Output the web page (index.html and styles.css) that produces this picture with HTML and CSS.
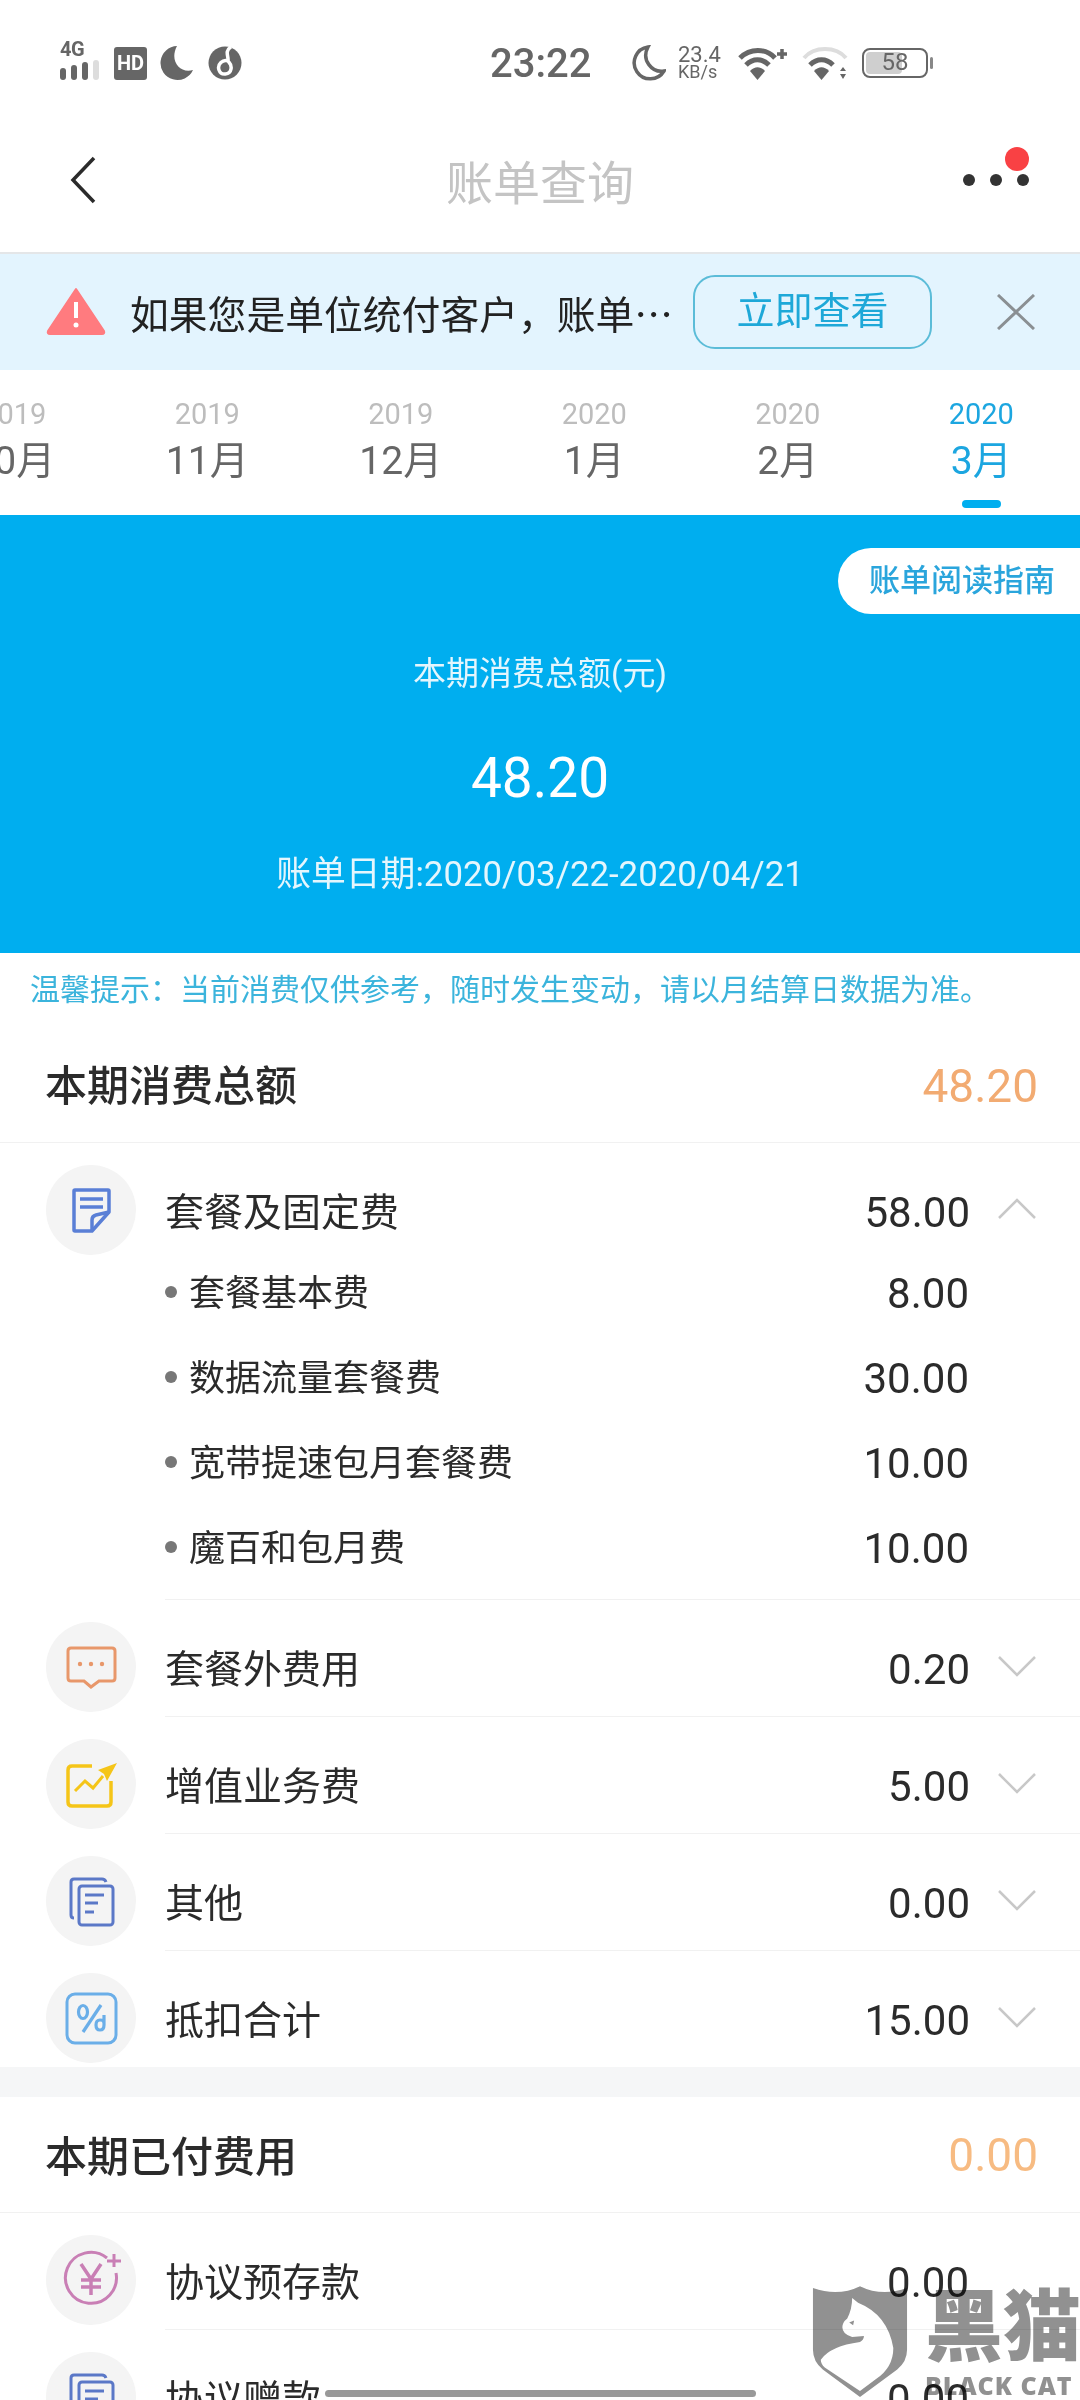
FILE: index.html
```html
<!DOCTYPE html>
<html lang="zh-CN">
<head>
<meta charset="UTF-8">
<title>账单查询</title>
<link rel="stylesheet" href="styles.css">
</head>
<body>
<div class="status-bar">
    <div class="status-left">
        <div class="signal">
            <span class="signal-type">4G</span>
            <span class="signal-bars"><i></i><i></i><i></i><i class="off"></i></span>
        </div>
        <span class="hd-badge">HD</span>
        <svg class="st-moon" viewBox="0 0 36 36"><path d="M19 1 A17 17 0 1 0 35 25 C22 29 11 16 19 1 Z" fill="#666"/></svg>
        <svg class="st-globe" viewBox="0 0 34 34"><circle cx="17" cy="17" r="16.500" fill="#666"/><path d="M23 1 C16 5 21 11 20 15 C15 13 9 18 11 24 C13 30 22 29 23 23 C24 18 21 17 20 15" fill="none" stroke="#fff" stroke-width="3.500"/></svg>
    </div>
    <span class="status-time">23:22</span>
    <div class="status-right">
        <svg class="st-moon-line" viewBox="0 0 36 36"><path d="M18 2 A16 16 0 1 0 34 26 C22 28 11 15 18 2 Z" fill="none" stroke="#666" stroke-width="3.500"/></svg>
        <div class="net-speed"><span class="speed-num">23.4</span><span class="speed-unit">KB/s</span></div>
        <svg class="st-wifi" viewBox="0 0 50 34"><g fill="none" stroke="#666" stroke-width="5"><path d="M2 12 C12 2 28 2 37 12"/><path d="M8 19 C15 12 24 12 31 19"/></g><path d="M12 25 C17 20 22 20 27 25 L19.500 34 Z" fill="#666"/><path d="M39 8 H49 M44 3 V13" stroke="#666" stroke-width="3.500"/></svg>
        <svg class="st-wifi" viewBox="0 0 50 34"><path d="M2 12 C12 0 34 0 44 12" fill="none" stroke="#ddd" stroke-width="4"/><path d="M8 19 C15 12 24 12 31 19" fill="none" stroke="#666" stroke-width="5"/><path d="M12 25 C17 20 22 20 27 25 L19.500 34 Z" fill="#666"/><path d="M41 21 L44 25 H38 Z M41 33 L44 28 H38 Z" fill="#666"/></svg>
        <div class="battery">
            <span class="battery-level"></span>
            <span class="battery-num">58</span>
        </div>
    </div>
</div>

<div class="nav">
    <svg class="nav-back" viewBox="0 0 26 48"><path d="M24 2 L3 24 L24 46" fill="none" stroke="#2b2b2b" stroke-width="3.500"/></svg>
    <span class="nav-title">账单查询</span>
    <div class="nav-more">
        <i class="nav-dot"></i><i class="nav-dot"></i><i class="nav-dot"></i>
        <i class="nav-badge"></i>
    </div>
</div>

<div class="notice">
    <svg class="notice-icon" viewBox="0 0 60 48"><path d="M30 2 L58 44 Q59 47 56 47 H4 Q1 47 2 44 Z" fill="#ff7b7f" stroke="#ff7b7f" stroke-width="2" stroke-linejoin="round"/><path d="M30 15 V31" stroke="#fff" stroke-width="4"/><circle cx="30" cy="38" r="2.500" fill="#fff"/></svg>
    <span class="notice-text">如果您是单位统付客户，账单⋯</span>
    <span class="notice-btn">立即查看</span>
    <svg class="notice-close" viewBox="0 0 38 36"><path d="M1 1 L37 35 M37 1 L1 35" stroke="#8a8f93" stroke-width="3"/></svg>
</div>

<div class="months">
    <div class="month"><span class="month-year">2019</span><span class="month-name">10月</span></div>
    <div class="month"><span class="month-year">2019</span><span class="month-name">11月</span></div>
    <div class="month"><span class="month-year">2019</span><span class="month-name">12月</span></div>
    <div class="month"><span class="month-year">2020</span><span class="month-name">1月</span></div>
    <div class="month"><span class="month-year">2020</span><span class="month-name">2月</span></div>
    <div class="month active"><span class="month-year">2020</span><span class="month-name">3月</span><i class="month-line"></i></div>
</div>

<div class="summary">
    <span class="guide-pill">账单阅读指南</span>
    <p class="summary-label">本期消费总额(元)</p>
    <p class="summary-amount">48.20</p>
    <p class="summary-date">账单日期:2020/03/22-2020/04/21</p>
</div>

<p class="tip">温馨提示：当前消费仅供参考，随时发生变动，请以月结算日数据为准。</p>

<div class="section-head">
    <span class="section-name">本期消费总额</span>
    <span class="section-amount">48.20</span>
</div>

<div class="item">
    <span class="item-icon">
        <svg viewBox="0 0 90 90"><g fill="none" stroke="#5a7fd6" stroke-width="3.500" stroke-linejoin="round"><path d="M29 25 H62 Q63 25 63 26 V47 L46 66 H29 Q28 66 28 65 V26 Q28 25 29 25 Z"/><path d="M63 47 L50 50 Q46 51 46 55 V66"/></g><path d="M34 34 H57 M34 42 H57" stroke="#5a7fd6" stroke-width="3.500"/></svg>
    </span>
    <div class="item-body">
        <div class="item-head">
            <span class="item-name">套餐及固定费</span>
            <span class="item-value">58.00</span>
            <svg class="item-arrow" viewBox="0 0 38 22"><path d="M1 20 L19 2 L37 20" fill="none" stroke="#c8c8c8" stroke-width="2.500"/></svg>
        </div>
        <div class="sub-row"><i class="sub-dot"></i><span class="sub-name">套餐基本费</span><span class="sub-value">8.00</span></div>
        <div class="sub-row"><i class="sub-dot"></i><span class="sub-name">数据流量套餐费</span><span class="sub-value">30.00</span></div>
        <div class="sub-row"><i class="sub-dot"></i><span class="sub-name">宽带提速包月套餐费</span><span class="sub-value">10.00</span></div>
        <div class="sub-row"><i class="sub-dot"></i><span class="sub-name">魔百和包月费</span><span class="sub-value">10.00</span></div>
    </div>
</div>

<div class="item">
    <span class="item-icon">
        <svg viewBox="0 0 90 90"><path d="M25 26 H66 Q69 26 69 29 V56 Q69 59 66 59 H53 L45 65 L38 59 H25 Q22 59 22 56 V29 Q22 26 25 26 Z" fill="none" stroke="#e8976a" stroke-width="3"/><circle cx="34" cy="42" r="2.200" fill="#e8976a"/><circle cx="45" cy="42" r="2.200" fill="#e8976a"/><circle cx="56" cy="42" r="2.200" fill="#e8976a"/></svg>
    </span>
    <div class="item-body">
        <div class="item-head">
            <span class="item-name">套餐外费用</span>
            <span class="item-value">0.20</span>
            <svg class="item-arrow" viewBox="0 0 38 22"><path d="M1 2 L19 20 L37 2" fill="none" stroke="#c8c8c8" stroke-width="2.500"/></svg>
        </div>
    </div>
</div>

<div class="item">
    <span class="item-icon">
        <svg viewBox="0 0 90 90"><path d="M46 27 H26 Q22 27 22 31 V63 Q22 67 26 67 H61 Q65 67 65 63 V42" fill="none" stroke="#f5c518" stroke-width="3.500"/><path d="M29 52 L39 42 L47 49 L57 37" fill="none" stroke="#f5c518" stroke-width="3"/><path d="M71 24 L52 31 L58 35 L61 42 Z" fill="#f5c518"/></svg>
    </span>
    <div class="item-body">
        <div class="item-head">
            <span class="item-name">增值业务费</span>
            <span class="item-value">5.00</span>
            <svg class="item-arrow" viewBox="0 0 38 22"><path d="M1 2 L19 20 L37 2" fill="none" stroke="#c8c8c8" stroke-width="2.500"/></svg>
        </div>
    </div>
</div>

<div class="item">
    <span class="item-icon">
        <svg viewBox="0 0 90 90"><g fill="none" stroke="#5b78c7" stroke-width="3"><path d="M60 26 Q59 23 56 23 H28 Q25 23 25 26 V59 Q25 62 28 62"/><rect x="33" y="30" width="34" height="39" rx="3"/></g><path d="M39 39 H58 M39 47 H52 M39 56 H48" stroke="#5b78c7" stroke-width="3"/></svg>
    </span>
    <div class="item-body">
        <div class="item-head">
            <span class="item-name">其他</span>
            <span class="item-value">0.00</span>
            <svg class="item-arrow" viewBox="0 0 38 22"><path d="M1 2 L19 20 L37 2" fill="none" stroke="#c8c8c8" stroke-width="2.500"/></svg>
        </div>
    </div>
</div>

<div class="item last">
    <span class="item-icon">
        <svg viewBox="0 0 90 90"><rect x="21" y="21" width="49" height="49" rx="8" fill="none" stroke="#6aaee8" stroke-width="3"/><g fill="none" stroke="#6aaee8" stroke-width="3.200"><ellipse cx="37" cy="39" rx="4.500" ry="6.500"/><path d="M37 59 L55 32"/><path d="M58 42 V52 Q58 57 54 57 Q50 57 50 52 Q50 47 54 47 Q58 47 58 50"/></g></svg>
    </span>
    <div class="item-body">
        <div class="item-head">
            <span class="item-name">抵扣合计</span>
            <span class="item-value">15.00</span>
            <svg class="item-arrow" viewBox="0 0 38 22"><path d="M1 2 L19 20 L37 2" fill="none" stroke="#c8c8c8" stroke-width="2.500"/></svg>
        </div>
    </div>
</div>

<div class="band"></div>

<div class="section-head paid">
    <span class="section-name">本期已付费用</span>
    <span class="section-amount">0.00</span>
</div>

<div class="item">
    <span class="item-icon">
        <svg viewBox="0 0 90 90"><path d="M61 23 A25.500 25.500 0 1 0 70 38" fill="none" stroke="#c97fb5" stroke-width="3"/><path d="M35 29 L45 44 L55 29 M45 44 V60 M35 45 H55 M35 52 H55" fill="none" stroke="#c97fb5" stroke-width="3.500"/><path d="M61 26 H75 M68 19 V32" stroke="#c97fb5" stroke-width="3"/></svg>
    </span>
    <div class="item-body">
        <div class="item-head">
            <span class="item-name">协议预存款</span>
            <span class="item-value">0.00</span>
        </div>
    </div>
</div>

<div class="item">
    <span class="item-icon">
        <svg viewBox="0 0 90 90"><g fill="none" stroke="#5b78c7" stroke-width="3"><path d="M60 26 Q59 23 56 23 H28 Q25 23 25 26 V59 Q25 62 28 62"/><rect x="33" y="30" width="34" height="39" rx="3"/></g><path d="M39 39 H58 M39 47 H52 M39 56 H48" stroke="#5b78c7" stroke-width="3"/></svg>
    </span>
    <div class="item-body">
        <div class="item-head">
            <span class="item-name">协议赠款</span>
            <span class="item-value">0.00</span>
        </div>
    </div>
</div>

<div class="watermark">
    <svg class="wm-shield" viewBox="0 0 100 116"><path d="M2 3 Q28 12 50 1 Q72 12 98 3 V66 Q98 78 88 86 L50 114 L12 86 Q2 78 2 66 Z" fill="#919191"/><path d="M42 13 L48 18 Q78 30 84 64 Q84 84 66 96 L50 108 L14 84 Q10 80 10 76 Q20 62 50 58 Q54 56 54 52 L42 53 Q32 50 32 43 Q32 38 37 34 Q42 24 42 13 Z" fill="#fff"/><path d="M39 38 L44 36 L43 41 Z" fill="#919191"/></svg>
    <div class="wm-text">
        <span class="wm-cn">黑猫</span>
        <span class="wm-en">BLACK CAT</span>
    </div>
</div>

<div class="home-bar"></div>
</body>
</html>
```

FILE: styles.css
```css
html,
body {
    margin: 0;
    padding: 0;
}

body {
    position: relative;
    width: 1080px;
    height: 2400px;
    overflow: hidden;
    background: #fff;
    color: #2b2b2b;
    font-family: Roboto, "Noto Sans CJK SC", sans-serif;
}

p {
    margin: 0;
}

i {
    display: block;
}

/* status bar */
.status-bar {
    display: flex;
    align-items: center;
    height: 126px;
    color: #666;
}

.status-left {
    display: flex;
    align-items: center;
    width: 490px;
    padding-left: 60px;
    box-sizing: border-box;
}

.signal {
    display: flex;
    flex-direction: column;
    width: 43px;
    margin-top: -6px;
}

.signal-type {
    font-size: 20px;
    line-height: 18px;
    font-weight: 700;
    letter-spacing: -0.5px;
}

.signal-bars {
    display: flex;
    align-items: flex-end;
    gap: 5px;
    height: 20px;
    margin-top: 2px;
}

.signal-bars i {
    width: 6px;
    background: #666;
    border-radius: 3px;
    height: 12px;
}

.signal-bars i:nth-child(2) {
    height: 15px;
}

.signal-bars i:nth-child(3) {
    height: 18px;
}

.signal-bars i.off {
    height: 20px;
    background: #ddd;
}

.hd-badge {
    width: 33px;
    height: 33px;
    margin-left: 11px;
    border-radius: 3px;
    background: #666;
    color: #fff;
    font-size: 20px;
    line-height: 33px;
    font-weight: 700;
    text-align: center;
}

.st-moon {
    width: 36px;
    height: 36px;
    margin-left: 11px;
}

.st-globe {
    width: 34px;
    height: 34px;
    margin-left: 14px;
}

.status-time {
    width: 140px;
    font-size: 40px;
    font-weight: 500;
    white-space: nowrap;
}

.status-right {
    display: flex;
    align-items: center;
}

.st-moon-line {
    width: 36px;
    height: 36px;
}

.net-speed {
    display: flex;
    flex-direction: column;
    margin-left: 12px;
    width: 50px;
    font-size: 18px;
    line-height: 17px;
    white-space: nowrap;
}

.speed-num {
    font-size: 22px;
}

.st-wifi {
    width: 50px;
    height: 34px;
    margin-left: 10px;
}

.st-wifi + .st-wifi {
    margin-left: 14px;
}

.battery {
    position: relative;
    width: 66px;
    height: 30px;
    margin-left: 10px;
    border: 2.500px solid #666;
    border-radius: 8px;
    box-sizing: border-box;
    text-align: center;
    font-size: 24px;
    line-height: 25px;
}

.battery::after {
    content: "";
    position: absolute;
    right: -7px;
    top: 7px;
    width: 3px;
    height: 12px;
    background: #888;
    border-radius: 2px;
}

.battery-level {
    position: absolute;
    left: 2px;
    top: 2px;
    bottom: 2px;
    width: 58%;
    background: #cfcfcf;
    border-radius: 4px;
}

.battery-num {
    position: relative;
}

/* title bar */
.nav {
    position: relative;
    display: flex;
    align-items: center;
    justify-content: center;
    height: 106px;
    padding-bottom: 20px;
    border-bottom: 2px solid #e4e6e8;
}

.nav-back {
    position: absolute;
    left: 70px;
    top: 30px;
    width: 26px;
    height: 48px;
}

.nav-title {
    font-size: 47px;
    color: #c4c4c4;
}

.nav-more {
    position: absolute;
    left: 963px;
    top: 48px;
    display: flex;
    gap: 15px;
}

.nav-dot {
    width: 12px;
    height: 12px;
    border-radius: 50%;
    background: #333;
}

.nav-badge {
    position: absolute;
    left: 42px;
    top: -27px;
    width: 24px;
    height: 24px;
    border-radius: 50%;
    background: #f94144;
}

/* notice */
.notice {
    display: flex;
    align-items: center;
    height: 116px;
    padding-left: 46px;
    background: #e3f4fe;
}

.notice-icon {
    width: 60px;
    height: 48px;
    margin-top: -2px;
}

.notice-text {
    width: 563px;
    margin-left: 24px;
    font-size: 38.800px;
    white-space: nowrap;
    color: #222;
}

.notice-btn {
    display: block;
    width: 239px;
    height: 74px;
    box-sizing: border-box;
    margin-top: -1px;
    border: 2px solid #5bbcd8;
    border-radius: 22px;
    color: #1ea8d8;
    font-size: 38px;
    line-height: 68px;
    text-align: center;
}

.notice-close {
    width: 38px;
    height: 36px;
    margin-left: 65px;
}

/* month tabs */
.months {
    display: flex;
    height: 145px;
    margin-left: -83px;
    overflow: hidden;
}

.month {
    display: flex;
    flex-direction: column;
    align-items: center;
    flex: 0 0 193.500px;
    padding-top: 27px;
    box-sizing: border-box;
}

.month-year {
    font-size: 29px;
    line-height: 34px;
    color: #bdbdbd;
}

.month-name {
    font-size: 39px;
    line-height: 60px;
    color: #666;
}

.month.active .month-year,
.month.active .month-name {
    color: #1ca6e0;
}

.month-line {
    width: 39px;
    height: 8px;
    margin-top: 9px;
    border-radius: 4px;
    background: #00aeef;
}

/* summary */
.summary {
    position: relative;
    height: 438px;
    background: #00aeef;
    color: #fff;
    text-align: center;
}

.guide-pill {
    position: absolute;
    right: 0;
    top: 33px;
    width: 242px;
    height: 66px;
    box-sizing: border-box;
    padding-left: 31px;
    border-radius: 33px 0 0 33px;
    background: #fff;
    color: #2aa5dc;
    font-size: 31px;
    font-weight: 500;
    line-height: 66px;
    text-align: left;
    white-space: nowrap;
}

.summary-label {
    padding-top: 136px;
    font-size: 33px;
    line-height: 46px;
    color: #e4f6fd;
}

.summary-amount {
    margin-top: 49px;
    font-size: 55px;
    line-height: 64px;
}

.summary-date {
    margin-top: 41px;
    font-size: 34.800px;
    line-height: 46px;
    color: #e4f6fd;
}

.tip {
    height: 77px;
    padding-left: 30px;
    font-size: 30px;
    line-height: 74px;
    color: #3bb4dc;
    white-space: nowrap;
}

/* bill list */
.section-head {
    display: flex;
    align-items: center;
    justify-content: space-between;
    height: 112px;
    padding: 0 42px 0 45px;
    border-bottom: 1px solid #f1f1f1;
}

.section-head.paid {
    height: 115px;
}

.section-name {
    padding-bottom: 7px;
    font-size: 42px;
    font-weight: 500;
    color: #2b2b2b;
}

.paid .section-name {
    padding-bottom: 3px;
}

.section-amount {
    font-size: 46px;
    color: #f2ab72;
}

.paid .section-amount {
    color: #f7bb82;
}

.item {
    display: flex;
    padding-left: 46px;
}

.item-icon {
    flex: 0 0 90px;
    width: 90px;
    height: 90px;
    margin-top: 22px;
    margin-right: 29px;
    border-radius: 50%;
    background: #f4f4f4;
}

.item-icon svg {
    display: block;
    width: 90px;
    height: 90px;
}

.item-body {
    flex: 1;
    padding-bottom: 8px;
    border-bottom: 1px solid #f1f1f1;
}

.item.last .item-body {
    border-bottom: 0;
}

.item-head {
    display: flex;
    align-items: center;
    height: 80px;
    padding-top: 28px;
}

.item-name {
    flex: 1;
    padding-bottom: 5px;
    font-size: 39px;
    color: #2b2b2b;
}

.item-value {
    width: 200px;
    margin-top: 2px;
    margin-right: 111px;
    font-size: 42px;
    text-align: right;
}

.item-arrow {
    width: 38px;
    height: 22px;
    margin-left: -83px;
    margin-right: 44px;
    margin-top: -4px;
}

.sub-row {
    display: flex;
    align-items: center;
    height: 85px;
}

.sub-dot {
    width: 12px;
    height: 12px;
    margin-right: 13px;
    margin-top: -3px;
    border-radius: 50%;
    background: #777;
}

.sub-name {
    flex: 1;
    margin-left: -1px;
    padding-bottom: 7px;
    font-size: 36px;
    color: #2b2b2b;
}

.sub-value {
    width: 200px;
    margin-right: 111px;
    font-size: 42px;
    text-align: right;
}

.band {
    height: 30px;
    background: #f5f6f7;
}

/* overlays */
.watermark {
    position: absolute;
    left: 811px;
    top: 2285px;
    display: flex;
    mix-blend-mode: multiply;
}

.wm-shield {
    width: 98px;
    height: 114px;
}

.wm-text {
    display: flex;
    flex-direction: column;
    margin-left: 16px;
    color: #919191;
    white-space: nowrap;
}

.wm-cn {
    margin-top: 2px;
    font-size: 78px;
    line-height: 84px;
    font-weight: 900;
}

.wm-en {
    font-family: "Open Sans", sans-serif;
    font-size: 25px;
    line-height: 28px;
    font-weight: 800;
    letter-spacing: 1px;
}

.home-bar {
    position: absolute;
    left: 325px;
    top: 2390px;
    width: 431px;
    height: 7px;
    border-radius: 4px;
    background: #999;
}
```
